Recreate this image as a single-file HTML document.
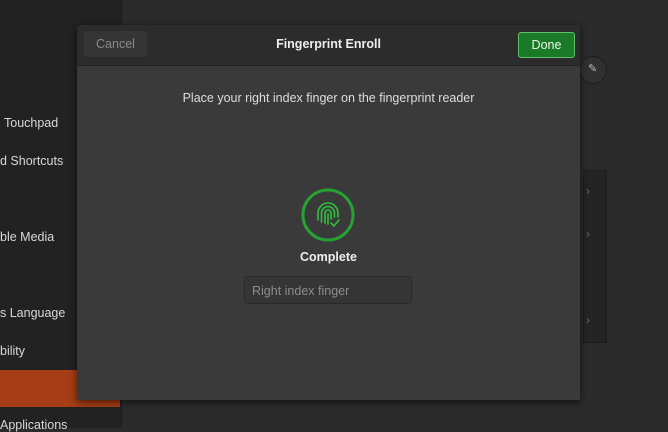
<!DOCTYPE html>
<html><head><style>
body{margin:0;width:668px;height:428px;background:#2b2b2b;position:relative;overflow:hidden;font-family:"Liberation Sans",sans-serif;}
.side{position:absolute;left:0;top:0;width:121px;height:428px;background:#222;border-right:1px solid #1c1c1c}
.si{position:absolute;left:0;color:#d8d8d8;font-size:12.5px;white-space:nowrap}
.orange{position:absolute;left:0;top:370px;width:120px;height:37px;background:#a63d16}
.list{position:absolute;left:583px;top:170px;width:22px;height:171px;background:#242424;border:1px solid #1e1e1e}
.arr{position:absolute;left:2px;color:#666;font-size:12px}
.edit{position:absolute;left:579px;top:56px;width:26px;height:26px;border-radius:50%;background:#303030;border:1px solid #1e1e1e}
.dlg{position:absolute;left:77px;top:25px;width:503px;height:375px;background:#3a3a3a;box-shadow:0 2px 8px rgba(0,0,0,.6);border-radius:4px 4px 0 0;overflow:hidden}
.hdr{position:absolute;left:0;top:0;width:503px;height:40px;background:#2c2c2c;border-bottom:1px solid #232323}
.btn{position:absolute;top:6px;height:26px;border-radius:3px;font-size:12.5px;line-height:26px;text-align:center}
</style></head><body>
<div class="side">
<div class="si" style="top:116px;left:4px">Touchpad</div>
<div class="si" style="top:154px">d Shortcuts</div>
<div class="si" style="top:230px">ble Media</div>
<div class="si" style="top:306px">s Language</div>
<div class="si" style="top:344px">bility</div>
<div class="si" style="top:418px">Applications</div>
</div>
<div class="orange"></div>
<div class="edit"><span style="position:absolute;left:8px;top:5px;color:#bbb;font-size:11px">✎</span></div>
<div class="list">
<div class="arr" style="top:13px">›</div>
<div class="arr" style="top:56px">›</div>
<div class="arr" style="top:142px">›</div>
</div>
<div class="dlg">
<div class="hdr">
<div class="btn" style="left:7px;width:63px;background:#353535;color:#8a8a8a">Cancel</div>
<div style="position:absolute;left:0;width:503px;top:12px;text-align:center;color:#eee;font-weight:bold;font-size:12.5px">Fingerprint Enroll</div>
<div class="btn" style="left:441px;top:7px;width:55px;height:24px;line-height:24px;background:#1a7a28;border:1px solid #5fbf6a;color:#e8f5e8">Done</div>
</div>
<div style="position:absolute;top:66px;width:503px;text-align:center;color:#ddd;font-size:12.5px">Place your right index finger on the fingerprint reader</div>
<svg style="position:absolute;left:223px;top:162px" width="56" height="56" viewBox="0 0 56 56">
<circle cx="28" cy="28" r="25" fill="none" stroke="#26a334" stroke-width="3"/>
<g fill="none" stroke="#2ec23e" stroke-width="1.6" stroke-linecap="round">
<path d="M18 33v-7a10 10 0 0 1 20 0v4"/>
<path d="M21.5 35v-9a6.5 6.5 0 0 1 13 0v4"/>
<path d="M25 36v-10a3 3 0 0 1 6 0v6"/>
<path d="M28 27v10"/>
<path d="M31 36l3 3 5-6"/>
</g></svg>
<div style="position:absolute;top:225px;width:503px;text-align:center;color:#eee;font-weight:bold;font-size:12.5px">Complete</div>
<div style="position:absolute;left:167px;top:251px;width:168px;height:28px;background:#353535;border:1px solid #2a2a2a;border-radius:3px;color:#8c8c8c;font-size:12.5px;line-height:28px;padding-left:7px;box-sizing:border-box">Right index finger</div>
</div>
</body></html>
